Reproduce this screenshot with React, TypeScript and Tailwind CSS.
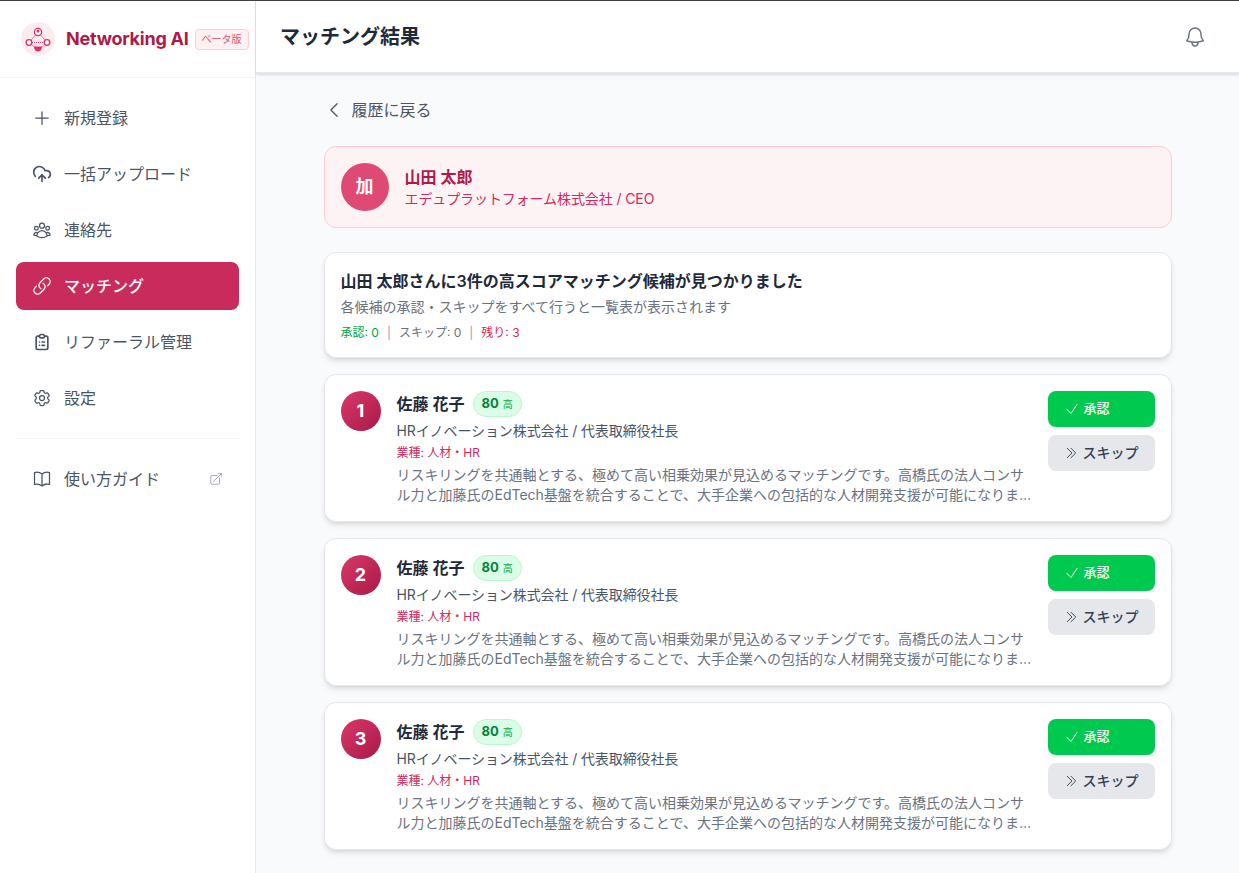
import { HiOutlinePlus, HiOutlineUserGroup, HiOutlineLink, HiOutlineCog6Tooth, HiOutlineBookOpen, HiOutlineChevronLeft, HiOutlineBell, HiOutlineCheck, HiOutlineChevronDoubleRight, HiOutlineArrowTopRightOnSquare } from "react-icons/hi2";
import { HiOutlineClipboardList } from "react-icons/hi";
import { CloudUpload } from "lucide-react";

const nav = [
  { label: "新規登録", Icon: HiOutlinePlus },
  { label: "一括アップロード", Icon: CloudUpload },
  { label: "連絡先", Icon: HiOutlineUserGroup },
  { label: "マッチング", Icon: HiOutlineLink, active: true },
  { label: "リファーラル管理", Icon: HiOutlineClipboardList },
  { label: "設定", Icon: HiOutlineCog6Tooth },
];

function Logo() {
  return (
    <svg width="34" height="34" viewBox="0 0 34 34" className="shrink-0">
      <circle cx="17" cy="17" r="17" fill="#fcecf0" />
      <g fill="none" stroke="#e0325f" strokeWidth="1.3">
        <path d="M17 10 L8 20.5 M17 10 L26 20.5 M8 20.5 L17 28 M26 20.5 L17 28" stroke="#eb7a96" strokeWidth="0.9" />
        <path d="M11 20.5h12" strokeDasharray="1 1" strokeWidth="0.9" />
        <circle cx="17" cy="10" r="3.6" fill="#fff" />
        <circle cx="8" cy="20.5" r="2.8" fill="#fff" />
        <circle cx="26" cy="20.5" r="2.8" fill="#fff" />
      </g>
      <circle cx="17" cy="9" r="1.5" fill="#e0325f" />
      <path d="M13 24.5h8c0 3-1.7 5-4 5s-4-2-4-5z" fill="#e0325f" />
    </svg>
  );
}

function Match({ n }: { n: number }) {
  return (
    <div className="flex h-[148px] gap-4 rounded-xl border border-gray-200 bg-white p-4 shadow-md">
      <div className="flex h-10 w-10 shrink-0 items-center justify-center rounded-full bg-gradient-to-br from-[#d9386a] to-[#a91849] text-lg font-bold text-white">
        {n}
      </div>
      <div className="min-w-0 flex-1">
        <div className="flex h-[26px] items-center gap-2">
          <span className="text-base font-semibold leading-6 text-gray-800">佐藤 花子</span>
          <span className="flex h-[26px] items-center gap-1 rounded-full border border-green-200 bg-green-100 px-2 text-[13px] font-bold text-green-700">
            80 <span className="text-[10px] font-normal text-green-600">高</span>
          </span>
        </div>
        <p className="mt-1 text-sm leading-5 tracking-[-0.1px] text-gray-600">HRイノベーション株式会社 / 代表取締役社長</p>
        <p className="mt-1 text-xs leading-4 text-[#d12a5c]">業種: 人材・HR</p>
        <p className="mt-1 line-clamp-2 text-sm leading-5 text-gray-500">
          リスキリングを共通軸とする、極めて高い相乗効果が見込めるマッチングです。高橋氏の法人コンサル力と加藤氏のEdTech基盤を統合することで、大手企業への包括的な人材開発支援が可能になります。
        </p>
      </div>
      <div className="flex w-[107px] shrink-0 flex-col gap-2">
        <button className="flex h-9 items-center gap-1 whitespace-nowrap rounded-lg bg-[#00c950] px-4 text-[13px] font-medium text-white">
          <HiOutlineCheck size={16} /> 承認
        </button>
        <button className="flex h-9 items-center gap-1 whitespace-nowrap rounded-lg bg-gray-200 px-4 text-sm font-medium text-gray-700">
          <HiOutlineChevronDoubleRight size={16} /> スキップ
        </button>
      </div>
    </div>
  );
}

export default function App() {
  return (
    <div className="flex h-[873px] overflow-hidden border-t border-[#3c4043] bg-gray-50 font-['Inter','Noto_Sans_CJK_JP',sans-serif]">
      <aside className="w-64 shrink-0 border-r border-gray-200 bg-white">
        <div className="flex h-[77px] items-center border-b border-gray-100 pl-[21px]">
          <Logo />
          <span className="ml-[11px] whitespace-nowrap text-lg font-bold tracking-[-0.25px] text-[#ad1a48]">Networking AI</span>
          <span className="ml-1.5 whitespace-nowrap rounded border border-rose-200 bg-rose-50 px-1.5 text-[10px] leading-[19px] text-[#d9537a]">ベータ版</span>
        </div>
        <nav className="flex flex-col gap-2 p-4">
          {nav.map(({ label, Icon, active }) => (
            <a
              key={label}
              className={`flex h-12 items-center gap-3 rounded-lg px-4 text-base ${active ? "bg-[#c92b5c] font-medium text-white" : "text-gray-600"}`}
            >
              <Icon size={20} />
              {label}
            </a>
          ))}
          <div className="my-2 border-t border-gray-100" />
          <a className="flex h-12 items-center gap-3 rounded-lg px-4 text-base text-gray-600">
            <HiOutlineBookOpen size={20} />
            <span className="flex-1">使い方ガイド</span>
            <HiOutlineArrowTopRightOnSquare size={14} className="text-gray-400" />
          </a>
        </nav>
      </aside>
      <div className="min-w-0 flex-1">
        <header className="flex h-[73px] items-center justify-between border-b-2 border-gray-200 bg-white pl-6 pr-8 shadow-sm">
          <h1 className="text-xl font-bold text-gray-800">マッチング結果</h1>
          <HiOutlineBell size={24} className="text-gray-500" />
        </header>
        <main className="mx-auto max-w-4xl px-6 pt-6">
          <div className="flex h-6 items-center gap-2 text-base text-gray-600">
            <HiOutlineChevronLeft size={20} />
            <span>履歴に戻る</span>
          </div>
          <section className="mt-6 flex h-[82px] items-center gap-4 rounded-xl border border-rose-200 bg-[#fdf2f4] px-4">
            <div className="flex h-12 w-12 items-center justify-center rounded-full bg-[#df4a75] text-lg font-bold text-white">加</div>
            <div>
              <p className="text-base font-semibold leading-6 text-[#ad1a48]">山田 太郎</p>
              <p className="text-sm leading-5 tracking-[-0.1px] text-[#d12a5c]">エデュプラットフォーム株式会社 / CEO</p>
            </div>
          </section>
          <section className="mt-6 h-[106px] rounded-xl border border-gray-200 bg-white p-4 shadow-md">
            <h2 className="text-base font-semibold leading-6 text-gray-800">山田 太郎さんに3件の高スコアマッチング候補が見つかりました</h2>
            <p className="mt-1 text-sm leading-5 text-gray-500">各候補の承認・スキップをすべて行うと一覧表が表示されます</p>
            <div className="mt-1.5 flex items-center gap-2 text-xs leading-5">
              <span className="text-[#00a63e]">承認: 0</span>
              <span className="text-gray-400">|</span>
              <span className="text-gray-500">スキップ: 0</span>
              <span className="text-gray-400">|</span>
              <span className="text-[#d12a5c]">残り: 3</span>
            </div>
          </section>
          <div className="mt-4 flex flex-col gap-4">
            <Match n={1} />
            <Match n={2} />
            <Match n={3} />
          </div>
        </main>
      </div>
    </div>
  );
}
